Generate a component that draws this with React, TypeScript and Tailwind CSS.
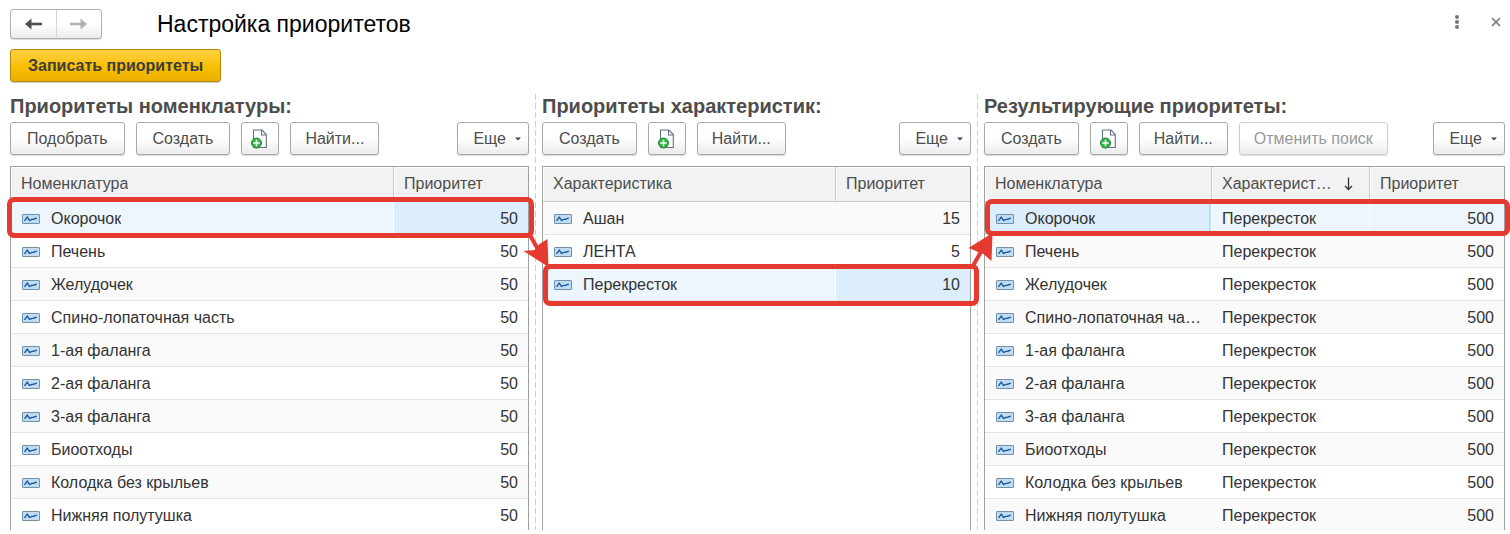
import React from 'react';

type Row = { name: string; feature?: string; value: number };
type Column = { key: 'name' | 'feature' | 'value'; title: string; sorted?: boolean };
type PanelProps = {
  title: string;
  buttons: React.ReactNode;
  columns: Column[];
  rows: Row[];
  selected: number;
  focused: 'name' | 'value';
  shade: 'odd' | 'even';
  marker: string;
};

const names = [
  'Окорочок',
  'Печень',
  'Желудочек',
  'Спино-лопаточная часть',
  '1-ая фаланга',
  '2-ая фаланга',
  '3-ая фаланга',
  'Биоотходы',
  'Колодка без крыльев',
  'Нижняя полутушка',
];

const goods: Row[] = names.map((name) => ({ name, value: 50 }));
const features: Row[] = [
  { name: 'Ашан', value: 15 },
  { name: 'ЛЕНТА', value: 5 },
  { name: 'Перекресток', value: 10 },
];
const results: Row[] = names.map((name) => ({ name, feature: 'Перекресток', value: 500 }));

function ItemIcon() {
  return (
    <svg width="18" height="10" viewBox="0 0 18 10" className="shrink-0" aria-hidden="true">
      <rect x="0.5" y="0.5" width="17" height="9" rx="0.5" fill="#bfdcf3" stroke="#7390ab" />
      <path d="M2.5 6.8 5.2 3.2 7.5 6.5 10 5.4 11.5 5.2 14.8 4.2" fill="none" stroke="#1c589c" strokeWidth="1.4" />
    </svg>
  );
}

function CopyIcon() {
  return (
    <svg width="16" height="20" viewBox="0 0 16 20" className="-ml-0.5" aria-hidden="true">
      <path d="M2.5 1H11L15.3 5.5V18.5H2.5Z" fill="#fff" stroke="#5f7388" strokeWidth="1.1" />
      <path d="M10.5 1V6H15.3" fill="none" stroke="#5f7388" strokeWidth="1.1" />
      <circle cx="5.5" cy="14" r="5" fill="#35b44a" stroke="#1d8a35" strokeWidth="1" />
      <path d="M5.5 10.8V17.2M2.3 14H8.7" stroke="#fff" strokeWidth="1.5" />
    </svg>
  );
}

type ButtonProps = { children: React.ReactNode; disabled?: boolean; label?: string; size?: string };

function Button({ children, disabled, label, size = 'px-4' }: ButtonProps) {
  return (
    <button
      type="button"
      disabled={disabled}
      aria-label={label}
      className={
        'flex h-[33px] shrink-0 items-center justify-center rounded-[3px] border bg-linear-to-b from-white from-50% to-[#ebebeb] shadow-[0_1px_1px_rgba(0,0,0,0.15)] ' +
        size +
        (disabled ? ' border-[#cfcfcf] text-[#999]' : ' border-[#a8a8a8] text-[#4d4d4d]')
      }
    >
      {children}
    </button>
  );
}

function MoreButton() {
  return (
    <div className="ml-auto">
      <Button size="px-[15px]">
        Еще
        <svg width="6" height="4" viewBox="0 0 6 4" className="-mr-2 ml-[9px]" aria-hidden="true">
          <path d="M0 0.5H6L3 3.5Z" fill="#444" />
        </svg>
      </Button>
    </div>
  );
}

const CreateAndCopy = () => (
  <>
    <Button>Создать</Button>
    <Button label="Скопировать" size="w-[38px]">
      <CopyIcon />
    </Button>
    <Button size="px-3.5">Найти...</Button>
  </>
);

function cellColor(props: PanelProps, index: number, key: string) {
  if (index === props.selected) {
    return key === props.focused ? 'bg-[#dcedfc]' : 'bg-[#edf5fd]';
  }
  return (index % 2 === 0) === (props.shade === 'odd') ? 'bg-[#fafafa]' : 'bg-white';
}

function Panel(props: PanelProps) {
  const { title, buttons, columns, rows, marker, selected, focused } = props;
  return (
    <section className="flex min-w-0 flex-col">
      <h2 className="h-7 text-xl leading-6 font-bold whitespace-nowrap text-[#4d4d4d]">{title}</h2>
      <div className="flex gap-[11px]">
        {buttons}
        <MoreButton />
      </div>
      <div className="relative mt-[11px] flex-1 border border-b-0 border-[#a0a0a0]">
        <table className="w-full table-fixed border-separate border-spacing-0">
          <thead>
            <tr>
              {columns.map((c) => (
                <th
                  key={c.key}
                  scope="col"
                  className={
                    'h-[35px] border-r border-b border-[#c8c8c8] bg-[#f2f2f2] px-2.5 text-left font-normal text-[#4d4d4d] shadow-[inset_1px_1px_0_#fff] last:border-r-0 ' +
                    (c.key === 'value' ? 'w-[134px]' : c.key === 'feature' ? 'w-[158px]' : '')
                  }
                >
                  <span className="flex items-center">
                    <span className={c.sorted ? 'w-[116px] truncate' : 'truncate'}>{c.title}</span>
                    {c.sorted && (
                      <svg width="9" height="14" viewBox="0 0 9 14" className="mr-1.5 ml-auto shrink-0" aria-hidden="true">
                        <path d="M4.5 0.5V12M1 9L4.5 12.5 8 9" fill="none" stroke="#333" strokeWidth="1.3" />
                      </svg>
                    )}
                  </span>
                </th>
              ))}
            </tr>
          </thead>
          <tbody>
            {rows.map((row, i) => (
              <tr key={row.name}>
                {columns.map((c) => (
                  <td
                    key={c.key}
                    className={
                      'border-b border-[#e4e4e4] pt-0.5 pb-0 pl-2.5 text-[#333] ' +
                      (c.key === 'name' ? 'pr-1.5 ' : 'pr-2.5 ') +
                      (i === 9 ? 'h-[31px] border-b-0 ' : 'h-[33px] ') +
                      (i === selected ? 'border-r border-r-white last:border-r-0 ' : '') +
                      (i === selected && focused === 'name' && c.key === 'name'
                        ? 'shadow-[inset_-2px_0_0_#b9dcf9,inset_0_1px_0_#b9dcf9,inset_0_-2px_0_#b9dcf9] '
                        : '') +
                      cellColor(props, i, c.key)
                    }
                  >
                    {c.key === 'name' ? (
                      <span className="flex items-center gap-[11px] pl-px">
                        <ItemIcon />
                        <span className="truncate">{row.name}</span>
                      </span>
                    ) : (
                      <span className={c.key === 'value' ? 'block text-right' : 'block'}>{row[c.key]}</span>
                    )}
                  </td>
                ))}
              </tr>
            ))}
          </tbody>
        </table>
        <div className={'pointer-events-none absolute z-10 rounded-[7px] border-5 border-[#e53a2f] ' + marker} />
      </div>
    </section>
  );
}

function Divider({ children }: { children: React.ReactNode }) {
  return (
    <div className="relative flex justify-center">
      <div className="w-px bg-[repeating-linear-gradient(to_bottom,#d0d0d0_0_6px,transparent_6px_9px)]" />
      <svg
        width="31"
        height="40"
        viewBox="0 0 31 40"
        className="absolute top-[136px] left-1/2 z-10 -translate-x-1/2 overflow-visible"
        fill="#e53a2f"
        stroke="#e53a2f"
        aria-hidden="true"
      >
        {children}
      </svg>
    </div>
  );
}

export default function App() {
  return (
    <main className="flex flex-col bg-white pt-2 pr-[5px] pb-1 pl-2.5 font-['Liberation_Sans',Arial,sans-serif] text-base leading-5 text-[#333]">
      <header className="flex h-[31px] items-center">
        <div className="flex h-[30px] w-[92px] rounded-[3px] border border-[#b0b0b0] bg-linear-to-b from-white from-50% to-[#ececec] shadow-[0_1px_1px_rgba(0,0,0,0.15)]">
          <button type="button" aria-label="Назад" className="flex flex-1 items-center justify-center border-r border-[#d4d4d4]">
            <svg width="17" height="12" viewBox="0 0 17 12" aria-hidden="true">
              <path d="M0 6 6.5 0.5V11.5Z" fill="#4d4d4d" />
              <path d="M4 6H17" stroke="#4d4d4d" strokeWidth="2.6" />
            </svg>
          </button>
          <button type="button" aria-label="Вперед" className="flex flex-1 items-center justify-center">
            <svg width="17" height="12" viewBox="0 0 17 12" aria-hidden="true">
              <path d="M17 6 10.5 0.5V11.5Z" fill="#b3b3b3" />
              <path d="M0 6H13" stroke="#b3b3b3" strokeWidth="2.6" />
            </svg>
          </button>
        </div>
        <h1 className="ml-[55px] text-[23px] leading-7 text-black">Настройка приоритетов</h1>
        <div className="ml-auto flex items-center gap-[23px] pb-1">
          <button type="button" aria-label="Меню" className="p-1">
            <svg width="6" height="14" viewBox="0 0 6 14" fill="#777" aria-hidden="true">
              <circle cx="3" cy="2" r="2" />
              <circle cx="3" cy="7" r="2" />
              <circle cx="3" cy="12" r="2" />
            </svg>
          </button>
          <button type="button" aria-label="Закрыть" className="p-1">
            <svg width="10" height="10" viewBox="0 0 10 10" aria-hidden="true">
              <path d="M1 1 9 9M9 1 1 9" stroke="#777" strokeWidth="1.6" />
            </svg>
          </button>
        </div>
      </header>
      <button
        type="button"
        className="mt-2.5 h-[33px] self-start rounded-[3px] border border-[#b38a05] bg-linear-to-b from-[#ffd23f] via-[#fac000] to-[#eab000] px-[17px] font-bold text-[#3d3d3d] shadow-[0_1px_1px_rgba(0,0,0,0.2)]"
      >
        Записать приоритеты
      </button>
      <div className="mt-3 grid grid-cols-[519fr_13px_429fr_13px_521fr]">
        <Panel
          title="Приоритеты номенклатуры:"
          buttons={
            <>
              <Button>Подобрать</Button>
              <CreateAndCopy />
            </>
          }
          columns={[
            { key: 'name', title: 'Номенклатура' },
            { key: 'value', title: 'Приоритет' },
          ]}
          rows={goods}
          selected={0}
          focused="value"
          shade="odd"
          marker="-left-1 -right-1.5 top-[30px] h-[41px]"
        />
        <Divider>
          <path d="M10 6 20 24" strokeWidth="4" fill="none" />
          <path d="M28 37 3 21 14 20 19 14 27 9Z" stroke="none" />
        </Divider>
        <Panel
          title="Приоритеты характеристик:"
          buttons={<CreateAndCopy />}
          columns={[
            { key: 'name', title: 'Характеристика' },
            { key: 'value', title: 'Приоритет' },
          ]}
          rows={features}
          selected={2}
          focused="value"
          shade="odd"
          marker="left-0 -right-[9px] top-[97px] h-[42px]"
        />
        <Divider>
          <path d="M11 35 20 19" strokeWidth="4" fill="none" />
          <path d="M30 3 6 18 16 22 21 24 29 31Z" stroke="none" />
        </Divider>
        <Panel
          title="Результирующие приоритеты:"
          buttons={
            <>
              <CreateAndCopy />
              <Button disabled size="px-3.5">
                Отменить поиск
              </Button>
            </>
          }
          columns={[
            { key: 'name', title: 'Номенклатура' },
            { key: 'feature', title: 'Характеристика', sorted: true },
            { key: 'value', title: 'Приоритет' },
          ]}
          rows={results}
          selected={0}
          focused="name"
          shade="even"
          marker="left-0 -right-1.5 top-8 h-[37px]"
        />
      </div>
    </main>
  );
}
